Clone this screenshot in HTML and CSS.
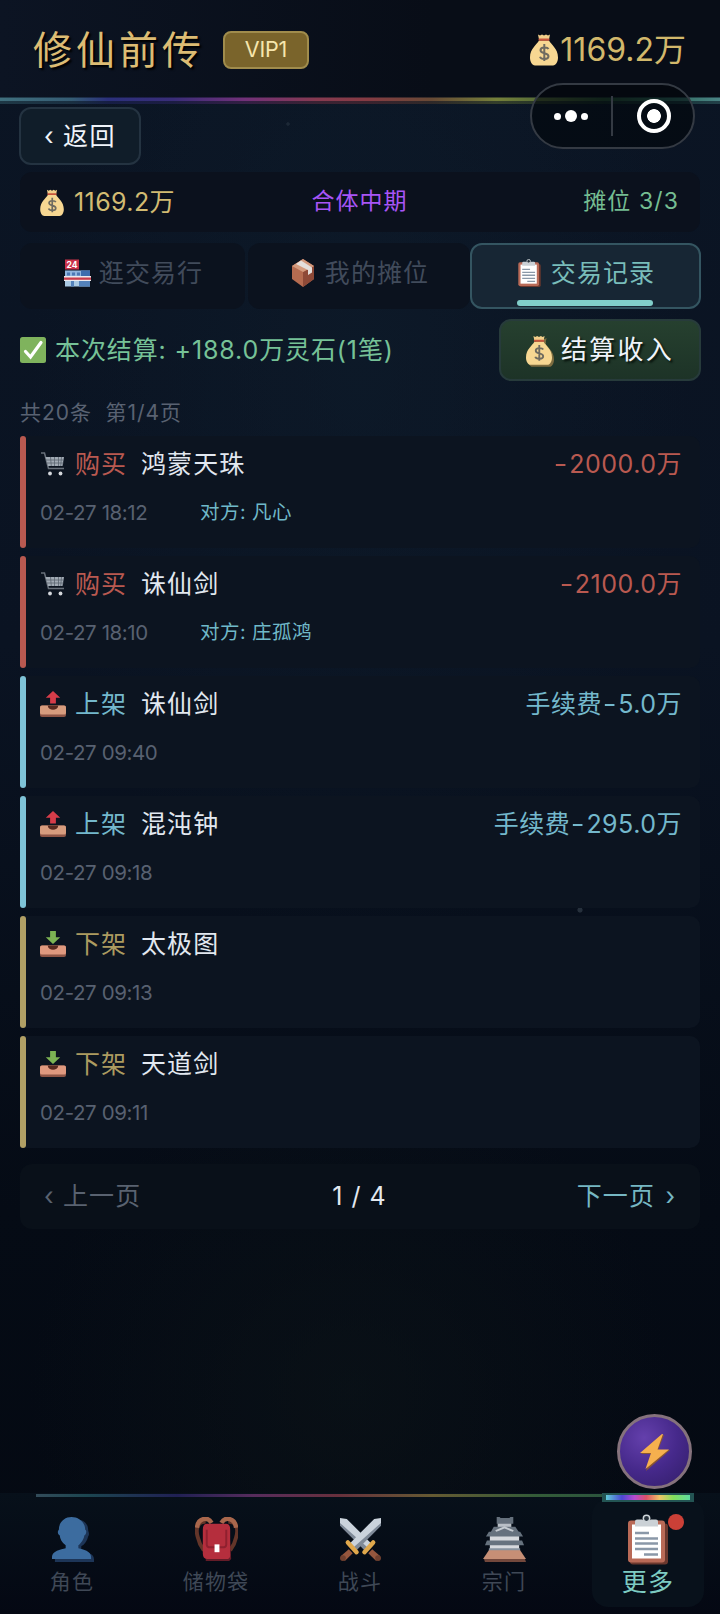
FILE: index.html
```html
<!DOCTYPE html>
<html lang="zh-CN">
<head>
  <meta charset="UTF-8">
  <meta name="viewport" content="width=device-width, initial-scale=1.0">
  <title>修仙前传</title>
  <link rel="stylesheet" href="styles.css">
</head>
<body>
  <!-- shared icons -->
  <svg class="sprite" width="0" height="0">
    <symbol id="bag" viewBox="0 0 28 32">
      <path d="M8 1l2 1 2-1 2 1 2-1 2 1 2-1-1 5H9z" fill="#f2cf8a"/>
      <path d="M9 7h10c2 4 9 8 9 17 0 4-2 8-5 8H5c-3 0-5-4-5-8C0 15 7 11 9 7z" fill="#f7d792"/>
      <rect x="8.500" y="5" width="11" height="2.200" rx="1" fill="#c8553c"/>
      <path d="M18.500 15.500c-1-2-8-2.500-8 1.200 0 4 8 2 8 6 0 3.500-7.500 3.500-8.500.5M14.300 10.500v17" fill="none" stroke="#6f6b60" stroke-width="2"/>
    </symbol>
    <symbol id="cart" viewBox="0 0 26 26">
      <path d="M1 2h3.500l4 15.500H24" fill="none" stroke="#68707a" stroke-width="1.500"/>
      <path d="M5.500 6H24l-1.500 9H8z" fill="#a2abb5"/>
      <path d="M6 9h17.500M7 12h16.500M10.500 6l.8 9M14.500 6v9M18.500 6v9M21.500 6l-.8 9" stroke="#5b6570" stroke-width=".8" fill="none"/>
      <circle cx="10" cy="22.500" r="1.900" fill="#d5d8dc"/><circle cx="20.500" cy="22.500" r="1.900" fill="#d5d8dc"/>
    </symbol>
    <symbol id="out" viewBox="0 0 27 27">
      <rect y="15" width="27" height="12" rx="2" fill="#8e5546"/>
      <rect y="15" width="27" height="9.500" rx="2" fill="#d79c7e"/>
      <path d="M8 15h11c-.5 6-10.500 6-11 0z" fill="#58291f"/>
      <path d="M13.500 0l7.500 7h-4.500v6h-6V7H6z" fill="#d53c49"/>
    </symbol>
    <symbol id="in" viewBox="0 0 27 27">
      <rect y="15" width="27" height="12" rx="2" fill="#8e5546"/>
      <rect y="15" width="27" height="9.500" rx="2" fill="#df997f"/>
      <path d="M8 15h11c-.5 6-10.500 6-11 0z" fill="#58291f"/>
      <path d="M13.500 13.500l7.500-7h-4.500V0h-6v6.500H6z" fill="#7cb353"/>
    </symbol>
    <symbol id="clip" viewBox="0 0 40 50">
      <rect x="2" y="9" width="38" height="41" rx="3" fill="#6b382e"/>
      <rect x="0" y="6" width="37" height="42" rx="3" fill="#b96a57"/>
      <rect x="4" y="10" width="29" height="34" fill="#fff"/>
      <circle cx="18.500" cy="4" r="3.200" fill="#27323c" stroke="#cfd6da" stroke-width="1.500"/>
      <path d="M7 12V7q0-2 2-2h5q4.500 4 9 0h5q2 0 2 2v5z" fill="#cbd1d6"/>
      <path d="M7 18.500h14M7 24h23M7 29h23M7 34.500h23M16 40h14" stroke="#8a98a8" stroke-width="2.400"/>
    </symbol>
  </svg>

  <header class="header">
    <h1 class="title">修仙前传</h1>
    <span class="vip">VIP1</span>
    <div class="wallet"><svg class="wallet-icon"><use href="#bag"/></svg><span>1169.2万</span></div>
    <div class="capsule">
      <i class="dot"></i><i class="dot big"></i><i class="dot"></i>
      <i class="sep"></i>
      <i class="ring"></i>
    </div>
  </header>
  <div class="rainbow"></div>

  <main class="page">
    <button class="back"><span class="arrow">‹</span>返回</button>

    <div class="info">
      <span class="gold"><svg class="info-icon"><use href="#bag"/></svg>1169.2万</span>
      <span class="realm">合体中期</span>
      <span class="stall">摊位 3/3</span>
    </div>

    <nav class="tabs">
      <div class="tab">
        <svg class="tab-icon" viewBox="0 0 27 27">
          <rect x="1" y="0" width="14" height="10" fill="#c93249"/>
          <text x="8" y="8.300" text-anchor="middle" class="store-num">24</text>
          <path d="M1 11h25v6H1z" fill="#8fb5df"/><path d="M17 11h9v6h-9z" fill="#3e6dae"/>
          <path d="M3 13h3v3H3zM8 13h3v3H8zM13 13h3v3h-3z" fill="#4c78b4"/>
          <path d="M0 16.500h27v5H0z" fill="#ebe9ee"/><path d="M0 18h27v2.300H0z" fill="#c93c4b"/>
          <path d="M1 21.500h25V27H1z" fill="#a9c9e4"/><path d="M7 21.500h3V27H7zM15 21.500h11V27H15z" fill="#5482bb"/>
        </svg>逛交易行
      </div>
      <div class="tab">
        <svg class="tab-icon box" viewBox="0 0 24 28">
          <path d="M12 0l11 7v13l-11 8L1 20V7z" fill="#b56b50"/>
          <path d="M12 13l11-6v13l-11 8z" fill="#8e4937"/>
          <path d="M1 7l11-7 11 7-11 6z" fill="#d49a7d"/>
          <path d="M5 5l5-3.500 11 7v5l-4 2.500v-5z" fill="#e4dedb"/>
        </svg>我的摊位
      </div>
      <div class="tab active"><svg class="tab-icon"><use href="#clip"/></svg>交易记录</div>
    </nav>

    <div class="settle">
      <svg class="check" viewBox="0 0 26 26"><rect width="26" height="26" rx="2.500" fill="#7fb35d"/><path d="M5.500 14.500l5 5.500L21 5.500" fill="none" stroke="#fff" stroke-width="3.200" stroke-linecap="round"/></svg>
      <span class="settle-text">本次结算: +188.0万灵石(1笔)</span>
      <button class="settle-btn"><svg class="settle-icon"><use href="#bag"/></svg>结算收入</button>
    </div>

    <div class="count">共20条&nbsp; 第1/4页</div>

    <section class="list">
      <div class="record buy">
        <div class="top"><svg class="rec-icon"><use href="#cart"/></svg><span class="kind">购买</span><span class="item">鸿蒙天珠</span><span class="amount"><span class="minus">-</span>2000.0万</span></div>
        <div class="sub"><span class="date">02-27 18:12</span><span class="peer">对方: 凡心</span></div>
      </div>
      <div class="record buy">
        <div class="top"><svg class="rec-icon"><use href="#cart"/></svg><span class="kind">购买</span><span class="item">诛仙剑</span><span class="amount"><span class="minus">-</span>2100.0万</span></div>
        <div class="sub"><span class="date">02-27 18:10</span><span class="peer">对方: 庄孤鸿</span></div>
      </div>
      <div class="record list-up">
        <div class="top"><svg class="rec-icon"><use href="#out"/></svg><span class="kind">上架</span><span class="item">诛仙剑</span><span class="amount">手续费<span class="minus">-</span>5.0万</span></div>
        <div class="sub"><span class="date">02-27 09:40</span></div>
      </div>
      <div class="record list-up">
        <div class="top"><svg class="rec-icon"><use href="#out"/></svg><span class="kind">上架</span><span class="item">混沌钟</span><span class="amount">手续费<span class="minus">-</span>295.0万</span></div>
        <div class="sub"><span class="date">02-27 09:18</span></div>
      </div>
      <div class="record list-down">
        <div class="top"><svg class="rec-icon"><use href="#in"/></svg><span class="kind">下架</span><span class="item">太极图</span></div>
        <div class="sub"><span class="date">02-27 09:13</span></div>
      </div>
      <div class="record list-down">
        <div class="top"><svg class="rec-icon"><use href="#in"/></svg><span class="kind">下架</span><span class="item">天道剑</span></div>
        <div class="sub"><span class="date">02-27 09:11</span></div>
      </div>
    </section>

    <div class="pager">
      <span class="prev"><span class="arrow">‹</span>上一页</span>
      <span class="now">1 / 4</span>
      <span class="next">下一页<span class="arrow">›</span></span>
    </div>
  </main>

  <div class="fab">
    <svg width="32" height="38" viewBox="0 0 32 38"><path d="M24 2L2 21h11L7 38l24-21H19l6-15z" fill="#8a5630"/><path d="M23 1L1 20h11L6.500 36 30 16.500H18.500L24 1z" fill="#f6b04e"/></svg>
  </div>

  <footer class="nav">
    <div class="nav-item">
      <svg class="nav-icon" viewBox="0 0 44 46">
        <path d="M4 46v-3c0-6 9-7 13-9v-4c-4-3-5-8-6-11-2-3 0-4 0-6C11 6 16 2 24 2s14 4 14 11c0 2 2 4 0 7-1 4-3 8-7 10v4c5 2 13 3 13 9v3z" fill="#1d3557"/>
        <path d="M1 43v-2c0-6 9-8 14-9v-3c-4-3-6-7-6-10-3-2-2-5-1-6C8 5 14 0 21 0s14 5 14 13c2 1 1 5-1 6 0 3-3 8-6 10v3c5 1 13 3 13 9v2z" fill="#3c6c9f"/>
      </svg>
      <span>角色</span>
    </div>
    <div class="nav-item">
      <svg class="nav-icon" viewBox="0 0 44 46">
        <path d="M11 5C3 4 0 12 3 21c1 5 3 9 6 13M34 5c8-1 11 7 8 16-1 5-3 9-6 13" fill="none" stroke="#633529" stroke-width="4"/>
        <path d="M17 6C13-1 3 1 2 11M27 6c4-7 14-5 15 5" fill="none" stroke="#a9674c" stroke-width="4.500"/>
        <path d="M12 9h23l2 34-2 2H11z" fill="#641c28"/>
        <path d="M12 7h20q4 0 4 6v26q0 4-4 4H13q-5 0-5-6V13q0-6 4-6z" fill="#b52e3d"/>
        <path d="M12 13v15q0 3 4 3h12q4 0 4-3V13" fill="none" stroke="#8f202f" stroke-width="2"/>
        <rect x="20" y="28" width="5" height="8" fill="#fff"/>
      </svg>
      <span>储物袋</span>
    </div>
    <div class="nav-item">
      <svg class="nav-icon" viewBox="0 0 44 46">
        <g id="sword">
          <path d="M1 1l7 1 25 25-6 6L1 8z" fill="#cbd3dc"/><path d="M1 6v3l25 25 3-3z" fill="#7f8a98"/>
          <path d="M34 33l8 7-4 5-8-8z" fill="#96573e"/>
          <path d="M35 26l-9 10" stroke="#e0a84c" stroke-width="4.500" stroke-linecap="round"/>
          <circle cx="40" cy="42" r="3" fill="#70402f"/>
        </g>
        <use href="#sword" transform="translate(44 0) scale(-1 1)"/>
      </svg>
      <span>战斗</span>
    </div>
    <div class="nav-item">
      <svg class="nav-icon" viewBox="0 0 44 46">
        <path d="M15 2h14v14H15z" fill="#b9bfc6"/><path d="M14 0h3l1 1h9l1-1h3v7H14z" fill="#65707c"/>
        <path d="M11 10h22l5 7H7z" fill="#67727e"/><path d="M13 14.500l9-4 9 4" stroke="#c5cbd1" stroke-width="2" fill="none"/>
        <path d="M7 18h30v15H7z" fill="#d6d9dd"/>
        <path d="M6 15h32l3 5H3zM4 24h36l2 5H2z" fill="#66727e"/>
        <path d="M6 32h32v3H6z" fill="#88939f"/>
        <path d="M6 34h32l6 9H0z" fill="#c68f76"/><path d="M1 43h42l1 3H2z" fill="#73483c"/>
      </svg>
      <span>宗门</span>
    </div>
    <div class="nav-item current">
      <svg class="nav-icon clip-icon"><use href="#clip"/></svg>
      <span>更多</span>
      <i class="badge"></i>
    </div>
  </footer>
</body>
</html>
```

FILE: styles.css
```css
*, *::before, *::after { box-sizing: border-box; }
body {
  margin: 0;
  height: 1614px;
  display: flex;
  flex-direction: column;
  position: relative;
  overflow: hidden;
  font-family: Inter, "Noto Sans CJK SC", sans-serif;
  font-size: 25px;
  letter-spacing: 1.1px;
  line-height: 1.2;
  color: #e2e8f0;
  background:
    radial-gradient(circle 5px at 260px 1224px, #14202c 80%, transparent),
    radial-gradient(circle 3px at 580px 910px, #26303c 70%, transparent),
    radial-gradient(circle 2px at 288px 124px, #1c2836 70%, transparent),
    radial-gradient(ellipse 330px 600px at 50% 360px, rgba(15,30,45,.5), transparent),
    radial-gradient(circle 320px at 350px 1390px, rgba(12,20,24,.6), transparent),
    linear-gradient(#0b1524, #0a1322 40%, #050b15 75%, #040912);
}
button { font: inherit; letter-spacing: inherit; color: #f0f4fa; padding: 0; }
svg { flex: none; }
.sprite { position: absolute; }

/* header */
.header { position: relative; z-index: 2; height: 97px; padding: 3px 34px 0 33px; display: flex; align-items: center; background: linear-gradient(90deg, #0c1423, #080d17 60%, #080d17); }
.title { margin: 0; font-size: 39px; font-weight: 400; letter-spacing: 4px; color: #dcbc74; text-shadow: 2px 2px 2px #000; }
.vip { margin-left: 18px; width: 86px; height: 38px; border: 2px solid #a08c4c; border-radius: 8px; background: #7a642b; color: #f6e6ad; font-size: 21.5px; letter-spacing: -.2px; display: flex; align-items: center; justify-content: center; }
.wallet { margin-left: auto; display: flex; align-items: center; gap: 2px; font-size: 32px; letter-spacing: 0; color: #d2b86b; }
.wallet-icon { width: 28px; height: 33px; }
.capsule { position: absolute; left: 530px; top: 83px; width: 165px; height: 66px; border: 2px solid #343a43; border-radius: 33px; background: rgba(2,6,12,.62); display: flex; align-items: center; padding-left: 22px; }
.dot { width: 7px; height: 7px; border-radius: 50%; background: #fff; }
.dot.big { width: 12px; height: 12px; margin: 0 4px; }
.sep { width: 2px; height: 40px; margin: 0 24px 0 23px; background: #343a43; }
.ring { width: 34px; height: 34px; border: 4px solid #fff; border-radius: 50%; background: radial-gradient(circle, #fff 6.5px, transparent 7.2px); }
.rainbow { height: 7px; background: linear-gradient(rgba(8,16,30,.5) 1px, transparent 1px, transparent 4px, rgba(8,18,32,.6) 4px), linear-gradient(90deg, #40707e, #355c74 10%, #2b307b 15%, #392d78 24%, #723179 34%, #863a50 44%, #853b43 51%, #674a35 60%, #75803a 69%, #4c6535 77%, #264c31 84%, #2d6759 92%, #4a8485); }

.page { padding: 3px 20px 0; flex: 1; }
.back { display: flex; align-items: center; width: 122px; height: 58px; padding: 0 0 0 23px; margin-left: -1px; border: 2px solid #243341; border-radius: 12px; background: #101d29; letter-spacing: 1.5px; }
.arrow { display: inline-block; width: 19px; font-size: 25px; letter-spacing: 0; text-align: left; }

.info { margin-top: 7px; height: 60px; padding: 0 21px 0 20px; border-radius: 12px; background: #0b111d; display: grid; grid-template-columns: 1fr auto 1fr; align-items: center; font-size: 23px; }
.gold { display: flex; align-items: center; gap: 10px; color: #d2bb72; font-size: 25px; letter-spacing: .4px; }
.info-icon { width: 24px; height: 27px; }
.realm { color: #a855f7; letter-spacing: 1px; }
.stall { color: #75bd92; text-align: right; }

.tabs { margin: 11px -1px 0 0; display: grid; grid-template-columns: 225px 222px 228px; gap: 3px; }
.tab { height: 66px; padding: 0 0 7px 2px; border-radius: 12px; background: #0b121e; color: #414b5b; display: flex; align-items: center; justify-content: center; letter-spacing: 1.1px; }
.tab-icon { width: 27px; height: 28px; margin-right: 8px; }
.tab-icon.box { width: 24px; margin-right: 10px; }
.store-num { font: bold 8.5px Inter, sans-serif; letter-spacing: 0; fill: #fff; }
.tab.active { position: relative; margin-left: -3px; border: 2px solid #345561; background: #172634; color: #79bdba; padding: 0 0 7px; }
.tab.active::after { content: ""; position: absolute; left: 45px; bottom: 1px; width: 136px; height: 6px; border-radius: 3px; background: #81cfca; }

.settle { margin: 10px -1px 0 0; height: 62px; display: flex; align-items: center; }
.check { width: 26px; height: 26px; }
.settle-text { margin-left: 9px; color: #76c297; letter-spacing: .88px; white-space: nowrap; }
.settle-btn { margin-left: auto; width: 202px; height: 62px; border: 2px solid #273b3b; border-radius: 12px; background: linear-gradient(#26402f, #1d3327); display: flex; align-items: center; justify-content: center; gap: 9px; font-size: 26px; letter-spacing: 2.2px; text-shadow: 2px 2px 2px #07120c; }
.settle-icon { width: 26px; height: 30px; filter: drop-shadow(2px 2px 0 #7d6c40); }

.count { margin: 18px 0 9px; height: 28px; line-height: 28px; font-size: 21px; letter-spacing: .95px; color: #596272; }

.list { display: grid; gap: 8px; }
.record { position: relative; height: 112px; padding: 11px 18px 0 20px; border-radius: 4px 10px 10px 4px; background: #0c1420; }
.record::before { content: ""; position: absolute; left: 0; top: 0; width: 6px; height: 112px; border-radius: 3px; }
.buy::before { background: #b95950; }
.list-up::before { background: #7ec3d7; }
.list-down::before { background: #b1a065; }
.top { height: 34px; display: flex; align-items: center; }
.rec-icon { width: 26px; height: 26px; }
.kind { margin-left: 9px; width: 66px; }
.amount { margin-left: auto; letter-spacing: .5px; }
.minus { display: inline-block; transform: scaleX(1.2); margin: 0 2px; }
.buy .kind, .buy .amount { color: #b95950; }
.list-up .kind, .list-up .amount { color: #74b8cc; }
.list-down .kind { color: #ac9b60; }
.sub { margin-top: 17px; height: 30px; display: flex; align-items: center; }
.date { width: 160px; font-size: 20.5px; letter-spacing: -.4px; color: #586171; }
.peer { font-size: 19.500px; letter-spacing: .5px; color: #70b9c9; }

.pager { margin-top: 16px; height: 65px; padding: 0 25px 1px 24px; border-radius: 12px; background: #091019; display: grid; grid-template-columns: 1fr auto 1fr; align-items: center; }
.prev { color: #596270; }
.next { color: #76b7c3; text-align: right; }
.next .arrow { width: 20px; text-align: right; }
.now { letter-spacing: 1px; }

.fab { position: absolute; z-index: 3; left: 617px; top: 1414px; width: 75px; height: 75px; border: 3px solid #85727c; border-radius: 50%; background: radial-gradient(circle at 35% 30%, #6440ac, #46298b 50%, #311d67); display: flex; align-items: center; justify-content: center; }

/* bottom bar */
.nav { position: relative; height: 121px; display: grid; grid-template-columns: repeat(5, 1fr); padding-top: 8px; background: linear-gradient(#07101a, #040813); }
.nav::before { content: ""; position: absolute; left: 36px; top: 1px; width: 640px; height: 3px; background: linear-gradient(90deg, #334c5a, #1c4650 8%, #202054 22%, #572c5c 34%, #68303d 47%, #655a32 62%, #345c38 78%, #234d42); }
.nav-item { position: relative; display: flex; flex-direction: column; align-items: center; padding-top: 16px; font-size: 21px; line-height: 30px; color: #3f4856; letter-spacing: 1.2px; }
.nav-icon { width: 43px; height: 45px; margin-bottom: 5px; }
.nav-item.current { margin: -2px 16px 0; width: 112px; height: 108px; border-radius: 16px; background: #08111b; color: #7dcbc2; font-size: 25px; padding-top: 15px; }
.nav-item.current .clip-icon { width: 40px; height: 51px; margin-bottom: 2px; }
.nav-item.current::before { content: ""; position: absolute; left: 10px; top: -6px; width: 92px; height: 9px; border: solid #235453; border-width: 2px 4px; background: linear-gradient(90deg, #60cbd8, #4b48d3 19%, #b64bd0 34%, #dc5267 48%, #edc567 64%, #84e05c 80%, #5fdda0); }
.badge { position: absolute; top: 15px; right: 20px; width: 16px; height: 16px; border-radius: 50%; background: #cb4037; }
```
